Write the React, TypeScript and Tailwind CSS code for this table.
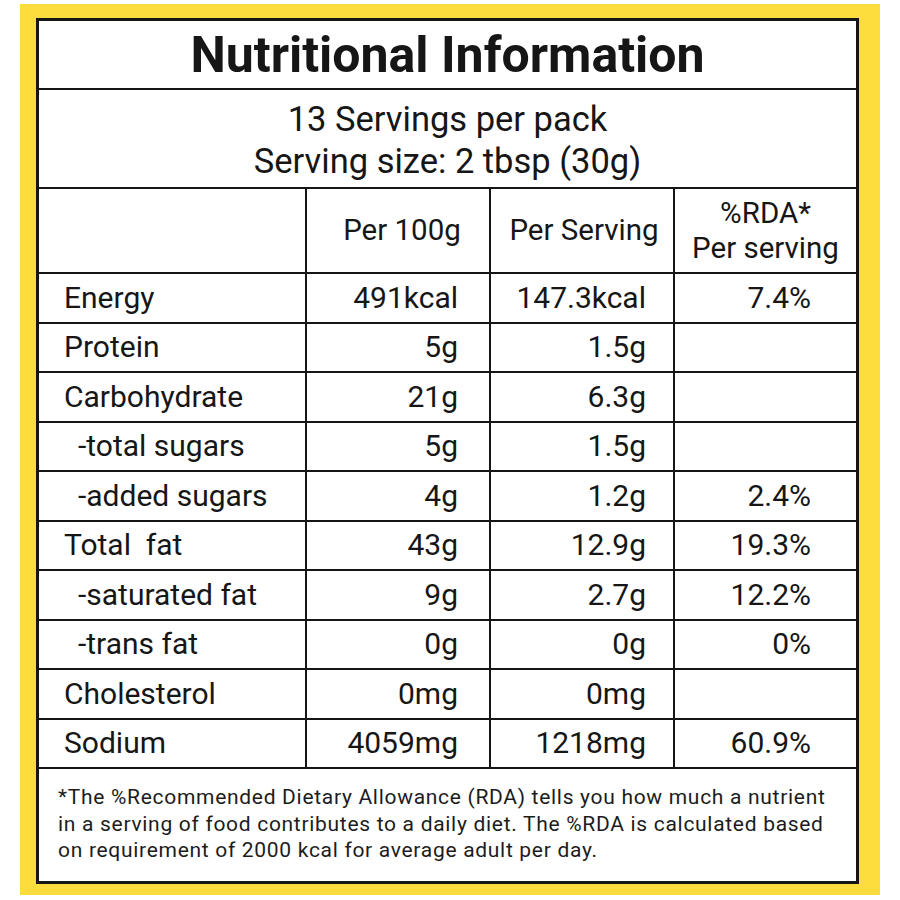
const rows = [
  { name: "Energy", per100: "491kcal", serving: "147.3kcal", rda: "7.4%" },
  { name: "Protein", per100: "5g", serving: "1.5g", rda: "" },
  { name: "Carbohydrate", per100: "21g", serving: "6.3g", rda: "" },
  { name: "-total sugars", per100: "5g", serving: "1.5g", rda: "", sub: true },
  { name: "-added sugars", per100: "4g", serving: "1.2g", rda: "2.4%", sub: true },
  { name: "Total  fat", per100: "43g", serving: "12.9g", rda: "19.3%" },
  { name: "-saturated fat", per100: "9g", serving: "2.7g", rda: "12.2%", sub: true },
  { name: "-trans fat", per100: "0g", serving: "0g", rda: "0%", sub: true },
  { name: "Cholesterol", per100: "0mg", serving: "0mg", rda: "" },
  { name: "Sodium", per100: "4059mg", serving: "1218mg", rda: "60.9%" },
];

export default function App() {
  return (
    <div className="w-[900px] h-[900px] bg-white pt-[4px] pl-[20px] font-['Roboto','Liberation_Sans',sans-serif] text-[#161616]">
      <div className="w-[860px] h-[891px] bg-[#fddc3d] pt-[14px] pl-[16px]">
        <div className="w-[823px] h-[866px] bg-white border-[3px] border-[#151515] flex flex-col">
          {/* title */}
          <div className="h-[69px] border-b-2 border-[#151515] flex items-center justify-center">
            <h1 className="text-[50px] font-bold leading-none">Nutritional Information</h1>
          </div>

          {/* servings */}
          <div className="h-[99px] border-b-2 border-[#151515] flex flex-col items-center justify-center pt-[2px] text-[34.5px] leading-[42px]">
            <p>13 Servings per pack</p>
            <p>Serving size: 2 tbsp (30g)</p>
          </div>

          {/* header */}
          <div className="h-[85px] border-b-2 border-[#151515] grid grid-cols-[268px_184px_184px_1fr] text-[29.5px]">
            <div className="border-r-2 border-[#151515]"></div>
            <div className="border-r-2 border-[#151515] flex items-center justify-center pl-[8px]">Per 100g</div>
            <div className="border-r-2 border-[#151515] flex items-center justify-center pl-[4px]">Per Serving</div>
            <div className="flex flex-col items-center justify-center leading-[35px]">
              <span>%RDA*</span>
              <span>Per serving</span>
            </div>
          </div>

          {/* rows */}
          {rows.map((r) => (
            <div
              key={r.name}
              className="h-[49.5px] border-b-2 border-[#151515] grid grid-cols-[268px_184px_184px_1fr] text-[30px] leading-none"
            >
              <div
                className={
                  "border-r-2 border-[#151515] flex items-center whitespace-pre " +
                  (r.sub ? "pl-[39px]" : "pl-[25px]")
                }
              >
                {r.name}
              </div>
              <div className="border-r-2 border-[#151515] flex items-center justify-end pr-[31px]">{r.per100}</div>
              <div className="border-r-2 border-[#151515] flex items-center justify-end pr-[27px]">{r.serving}</div>
              <div className="flex items-center justify-end pr-[45px]">{r.rda}</div>
            </div>
          ))}

          {/* footnote */}
          <div className="flex-1 pl-[19px] pt-[15px] text-[21px] tracking-[0.7px] leading-[26.5px] text-[#1c1c1c]">
            <p>*The %Recommended Dietary Allowance (RDA) tells you how much a nutrient</p>
            <p>in a serving of food contributes to a daily diet. The %RDA is calculated based</p>
            <p>on requirement of 2000 kcal for average adult per day.</p>
          </div>
        </div>
      </div>
    </div>
  );
}
